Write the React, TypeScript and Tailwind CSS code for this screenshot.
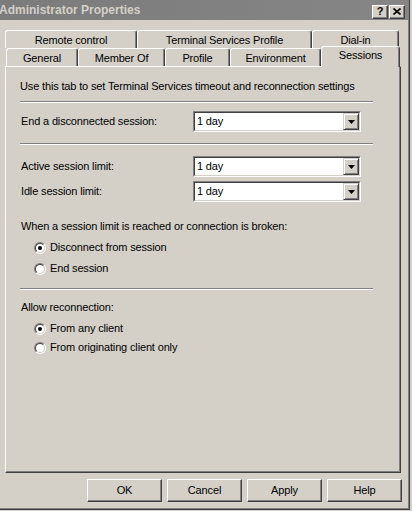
import React from 'react';

const FONT = "font-['Liberation_Sans',Arial,sans-serif]";

const Tab = ({ label, w, selected }: { label: string; w: string; selected?: boolean }) => (
  <div
    className={`${w} ${
      selected ? 'h-[21px] -mt-[2px] -mb-[1px] relative z-10 pb-[3px]' : 'h-full pt-[1px]'
    } flex items-center justify-center bg-[#d4d0c8] border-t border-l border-white border-r border-r-[#404040] rounded-t-[3px] shadow-[inset_-1px_0_0_#808080] whitespace-nowrap`}
  >
    {label}
  </div>
);

const Separator = ({ className }: { className: string }) => (
  <div className={`${className} w-[353px] h-[2px] border-t border-[#808080] border-b border-b-white`} />
);

const Combo = () => (
  <div className="w-[168px] h-[21px] border-t border-l border-[#808080] border-r border-b border-r-white border-b-white">
    <div className="h-full flex items-center bg-white border-t border-l border-[#404040] border-r border-b border-r-[#d4d0c8] border-b-[#d4d0c8]">
      <span className="flex-1 pl-[2px]">1 day</span>
      <div className="w-[16px] h-full flex items-center justify-center bg-[#d4d0c8] border-t border-l border-[#d4d0c8] border-r border-b border-r-[#404040] border-b-[#404040] shadow-[inset_1px_1px_0_#ffffff,inset_-1px_-1px_0_#808080]">
        <svg width="7" height="4" viewBox="0 0 7 4">
          <path d="M0 0h7L3.5 4z" fill="#000" />
        </svg>
      </div>
    </div>
  </div>
);

const ComboRow = ({ label, className }: { label: string; className: string }) => (
  <div className={`${className} flex items-center h-[21px]`}>
    <span className="w-[173px] pl-[1px]">{label}</span>
    <Combo />
  </div>
);

const Radio = ({ label, checked, className }: { label: string; checked?: boolean; className: string }) => (
  <div className={`${className} flex items-center h-[13px] pl-[14px]`}>
    <div className="w-[12px] h-[12px] rounded-full border border-t-[#808080] border-l-[#808080] border-r-white border-b-white">
      <div className="w-full h-full rounded-full flex items-center justify-center bg-white border border-t-[#404040] border-l-[#404040] border-r-[#d4d0c8] border-b-[#d4d0c8]">
        {checked && <div className="w-[4px] h-[4px] rounded-full bg-black" />}
      </div>
    </div>
    <span className="ml-[4px]">{label}</span>
  </div>
);

const Button = ({ label }: { label: string }) => (
  <div className="w-[75px] h-[23px] flex items-center justify-center border-t border-l border-white border-r border-b border-r-[#404040] border-b-[#404040] shadow-[inset_-1px_-1px_0_#808080]">
    {label}
  </div>
);

export default function App() {
  return (
    <div className={`w-[412px] h-[511px] bg-[#d4d0c8] text-[11px] leading-[13px] tracking-[-0.15px] text-black ${FONT} overflow-hidden`}>
      <div className="w-[410px] h-[510px] border-r border-b border-[#404040]">
        <div className="h-full flex flex-col border-r border-b border-[#808080]">
          {/* Title bar */}
          <div className="h-[20px] flex items-center bg-gradient-to-r from-[#7b7b7b] to-[#868686] pr-[3px]">
            <span className="flex-1 -ml-[1px] font-bold text-[12px] text-[#d4d0c8] tracking-normal">
              Administrator Properties
            </span>
            <div className="flex mt-[3px]">
              <div className="w-[16px] h-[14px] flex items-center justify-center bg-[#d4d0c8] border-t border-l border-white border-r border-b border-r-[#404040] border-b-[#404040] shadow-[inset_-1px_-1px_0_#808080] font-bold text-[11px]">
                ?
              </div>
              <div className="w-[16px] h-[14px] ml-[1px] flex items-center justify-center bg-[#d4d0c8] border-t border-l border-white border-r border-b border-r-[#404040] border-b-[#404040] shadow-[inset_-1px_-1px_0_#808080]">
                <svg width="8" height="7" viewBox="0 0 8 7">
                  <path d="M0.5 0.5l7 6M7.5 0.5l-7 6" stroke="#000" strokeWidth="1.6" />
                </svg>
              </div>
            </div>
          </div>

          {/* Tabs */}
          <div className="flex ml-[5px] mt-[10px] h-[18px]">
            <Tab label="Remote control" w="w-[132px]" />
            <Tab label="Terminal Services Profile" w="w-[175px]" />
            <Tab label="Dial-in" w="w-[87px]" />
          </div>
          <div className="flex ml-[6px] h-[18px]">
            <Tab label="General" w="w-[72px]" />
            <Tab label="Member Of" w="w-[87px]" />
            <Tab label="Profile" w="w-[65px]" />
            <Tab label="Environment" w="w-[91px]" />
            <Tab label="Sessions" w="w-[79px]" selected />
          </div>

          {/* Panel */}
          <div className="ml-[5px] w-[396px] h-[407px] border-t border-l border-white border-r border-b border-r-[#404040] border-b-[#404040] shadow-[inset_-1px_-1px_0_#808080] pl-[14px]">
            <div className="mt-[13px] h-[13px]">Use this tab to set Terminal Services timeout and reconnection settings</div>
            <Separator className="mt-[8px]" />
            <ComboRow className="mt-[8px]" label="End a disconnected session:" />
            <Separator className="mt-[11px]" />
            <ComboRow className="mt-[11px]" label="Active session limit:" />
            <ComboRow className="mt-[4px]" label="Idle session limit:" />
            <div className="mt-[18px] h-[13px] pl-[1px]">When a session limit is reached or connection is broken:</div>
            <Radio className="mt-[8px]" label="Disconnect from session" checked />
            <Radio className="mt-[8px]" label="End session" />
            <Separator className="mt-[13px]" />
            <div className="mt-[11px] h-[13px] pl-[1px]">Allow reconnection:</div>
            <Radio className="mt-[8px]" label="From any client" checked />
            <Radio className="mt-[6px]" label="From originating client only" />
          </div>

          {/* Buttons */}
          <div className="flex justify-end gap-[5px] mt-[6px] pr-[6px]">
            <Button label="OK" />
            <Button label="Cancel" />
            <Button label="Apply" />
            <Button label="Help" />
          </div>
        </div>
      </div>
    </div>
  );
}
